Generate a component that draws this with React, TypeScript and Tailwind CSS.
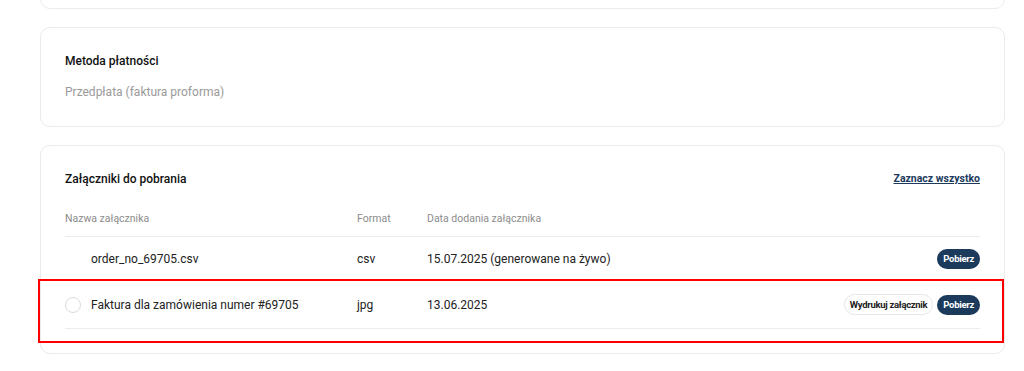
import React from "react";

const rows = [
  {
    name: "order_no_69705.csv",
    format: "csv",
    date: "15.07.2025 (generowane na żywo)",
    checkbox: false,
    print: false,
    height: "h-[44px]",
  },
  {
    name: "Faktura dla zamówienia numer #69705",
    format: "jpg",
    date: "13.06.2025",
    checkbox: true,
    print: true,
    height: "h-[48px]",
  },
];

export default function App() {
  return (
    <div className="relative h-[371px] w-[1024px] overflow-hidden bg-white font-['Roboto',sans-serif] text-[#222]">
      <div className="ml-[40px] flex w-[965px] flex-col gap-[18px]">
        {/* Previous card, cut by the top edge */}
        <div className="-mt-[30px] h-[39px] rounded-[10px] border border-[#ebebeb]" />

        {/* Payment method */}
        <div className="rounded-[10px] border border-[#ebebeb] px-[24px] pt-[25px] pb-[26px]">
          <p className="text-[12px] leading-[16px] font-medium text-[#111]">Metoda płatności</p>
          <p className="mt-[15px] text-[12px] leading-[16px] text-[#9a9a9a]">
            Przedpłata (faktura proforma)
          </p>
        </div>

        {/* Attachments */}
        <div className="rounded-[10px] border border-[#ebebeb] px-[24px] pt-[25px] pb-[24px]">
          <div className="flex items-center justify-between">
            <p className="text-[12px] leading-[16px] font-medium text-[#111]">Załączniki do pobrania</p>
            <a className="text-[10.5px] leading-[16px] font-bold text-[#1c3a5c] underline">
              Zaznacz wszystko
            </a>
          </div>

          <div className="mt-[24px] flex border-b border-[#ececec] pb-[9px] text-[10.5px] leading-[16px] text-[#8c8c8c]">
            <span className="w-[292px]">Nazwa załącznika</span>
            <span className="w-[70px]">Format</span>
            <span>Data dodania załącznika</span>
          </div>

          {rows.map((row) => (
            <div
              key={row.name}
              className={`flex ${row.height} items-center border-b border-[#ececec] text-[12px] leading-[16px]`}
            >
              <div className="flex w-[292px] items-center gap-[10px]">
                <span
                  className={
                    row.checkbox
                      ? "h-[16px] w-[16px] rounded-full border border-[#dcdcdc] bg-white"
                      : "h-[16px] w-[16px]"
                  }
                />
                <span>{row.name}</span>
              </div>
              <span className="w-[70px]">{row.format}</span>
              <span className="flex-1">{row.date}</span>
              <div className="flex items-center gap-[4px]">
                {row.print && (
                  <button className="h-[21px] rounded-full border border-[#e6e6e6] bg-white px-[5px] text-[9.5px] font-bold tracking-[-0.3px] text-[#222]">
                    Wydrukuj załącznik
                  </button>
                )}
                <button className="h-[20px] rounded-full bg-[#1c3a5c] px-[6px] text-[9.5px] font-bold tracking-[-0.3px] text-white">
                  Pobierz
                </button>
              </div>
            </div>
          ))}
        </div>
      </div>

      {/* Red highlight annotation */}
      <div className="pointer-events-none absolute left-[38px] top-[279px] h-[64px] w-[966px] border-2 border-[#ff0000]" />
    </div>
  );
}
